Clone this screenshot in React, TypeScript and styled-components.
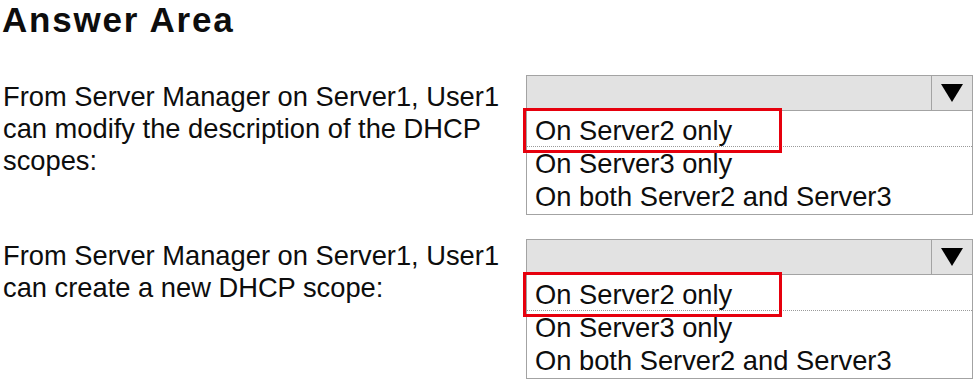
import React from "react";
import styled, { createGlobalStyle } from "styled-components";

const Global = createGlobalStyle`
  html, body { margin: 0; padding: 0; background: #ffffff; }
  body { font-family: "Liberation Sans", Arial, sans-serif; color: #0d0d0d; }
  * { box-sizing: border-box; }
`;

const Page = styled.div`
  width: 974px;
  height: 381px;
  padding-left: 2px;
  overflow: hidden;
`;

const Title = styled.h1`
  margin: 0;
  font-size: 35px;
  font-weight: 700;
  letter-spacing: 1.8px;
  line-height: 40px;
`;

const Questions = styled.div`
  margin-top: 35px;
  display: flex;
  flex-direction: column;
  gap: 24px;
`;

const Row = styled.div`
  display: grid;
  grid-template-columns: 524px 447px;
  align-items: start;
`;

const Statement = styled.div<{ $offset: number }>`
  font-size: 27.3px;
  line-height: 32px;
  padding-top: ${(p) => p.$offset}px;
  padding-left: 1px;
`;

const Select = styled.div`
  display: flex;
  flex-direction: column;
  width: 447px;
`;

const Header = styled.div`
  display: flex;
  height: 36px;
  background: #e2e2e2;
  border: 1px solid #a3a3a3;
`;

const Field = styled.div`
  flex: 1;
`;

const ArrowCell = styled.div`
  width: 41px;
  border-left: 1px solid #a3a3a3;
  display: flex;
  align-items: center;
  justify-content: center;
`;

const List = styled.ul`
  list-style: none;
  margin: 0;
  padding: 3px 0 1px 0;
  border: 1px solid #a3a3a3;
  border-top: none;
  background: #ffffff;
`;

const Option = styled.li<{ $selected?: boolean; $divider?: boolean }>`
  position: relative;
  height: 33px;
  line-height: 33px;
  padding-left: 8px;
  font-size: 27.3px;
  white-space: nowrap;
  border-bottom: ${(p) => (p.$divider ? "1px dotted #9a9a9a" : "none")};

  ${(p) =>
    p.$selected &&
    `
    &::after {
      content: "";
      position: absolute;
      left: -4px;
      top: -6px;
      width: 253px;
      height: 39px;
      border: 3px solid #e6000d;
    }
  `}
`;

const options = ["On Server2 only", "On Server3 only", "On both Server2 and Server3"];

const Dropdown: React.FC = () => (
  <Select>
    <Header>
      <Field />
      <ArrowCell>
        <svg width="22" height="18" viewBox="0 0 22 18">
          <polygon points="0,0 22,0 11,18" fill="#000" />
        </svg>
      </ArrowCell>
    </Header>
    <List>
      {options.map((o, i) => (
        <Option key={o} $selected={i === 0} $divider={i === 0}>
          {o}
        </Option>
      ))}
    </List>
  </Select>
);

const questions = [
  {
    text: "From Server Manager on Server1, User1 can modify the description of the DHCP scopes:",
    offset: 6,
  },
  {
    text: "From Server Manager on Server1, User1 can create a new DHCP scope:",
    offset: 1,
  },
];

export default function App() {
  return (
    <Page>
      <Global />
      <Title>Answer Area</Title>
      <Questions>
        {questions.map((q) => (
          <Row key={q.text}>
            <Statement $offset={q.offset}>{q.text}</Statement>
            <Dropdown />
          </Row>
        ))}
      </Questions>
    </Page>
  );
}
